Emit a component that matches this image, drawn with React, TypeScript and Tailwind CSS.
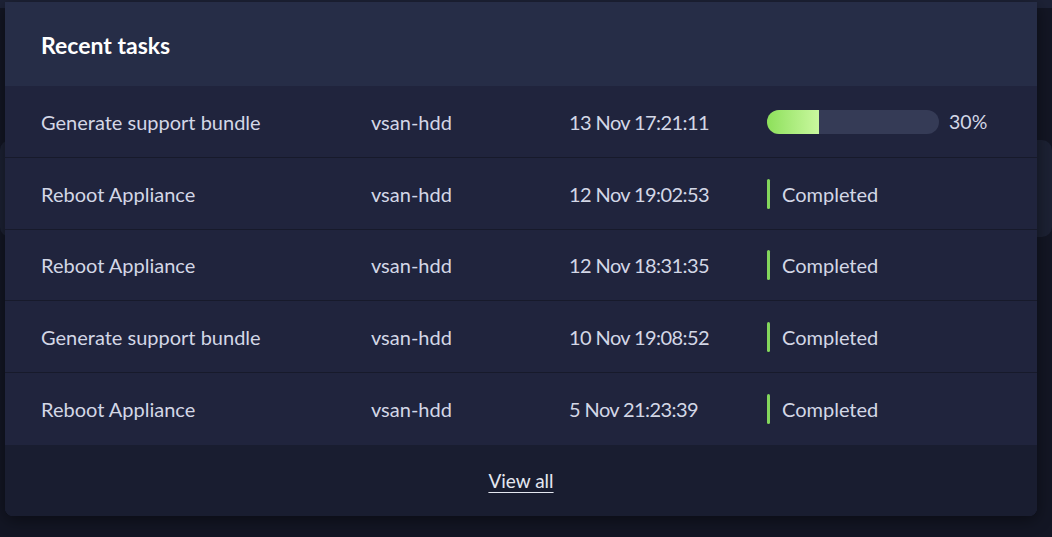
const tasks = [
  { name: "Generate support bundle", host: "vsan-hdd", time: "13 Nov 17:21:11", progress: 30 },
  { name: "Reboot Appliance", host: "vsan-hdd", time: "12 Nov 19:02:53", status: "Completed" },
  { name: "Reboot Appliance", host: "vsan-hdd", time: "12 Nov 18:31:35", status: "Completed" },
  { name: "Generate support bundle", host: "vsan-hdd", time: "10 Nov 19:08:52", status: "Completed" },
  { name: "Reboot Appliance", host: "vsan-hdd", time: "5 Nov 21:23:39", status: "Completed" },
];

export default function App() {
  return (
    <div
      className="relative h-[537px] w-[1052px] overflow-hidden bg-[#131624]"
      style={{ fontFamily: "Lato, 'Open Sans', sans-serif" }}
    >
      {/* page behind the popover */}
      <div className="flex h-full flex-col">
        <div className="h-[8px] bg-[#1d2236]" />
        <div className="h-[132px]" />
        <div className="h-[97px] rounded-[10px] bg-[#1c2133]" />
      </div>

      {/* recent tasks card */}
      <div className="absolute left-[5px] top-[2px] w-[1032px] overflow-hidden rounded-b-[8px] bg-[#20243d] shadow-[0_4px_16px_rgba(0,0,0,0.45)]">
        <div className="flex h-[84px] items-center bg-[#262d47] px-[36px] pt-[2px]">
          <h2 className="text-[23px] leading-[28px] font-bold text-white">Recent tasks</h2>
        </div>

        <div className="divide-y divide-[#171a2b]">
          {tasks.map((t, i) => (
            <div
              key={i}
              className="flex h-[71.75px] items-center px-[36px] pt-[1px] text-[20px] leading-[28px] text-[#d3d7e6]"
            >
              <div className="w-[330px]">{t.name}</div>
              <div className="w-[198px]">{t.host}</div>
              <div className="w-[198px] tracking-[-0.6px]">{t.time}</div>
              {t.progress !== undefined ? (
                <div className="flex items-center gap-[10px]">
                  <div className="h-[24px] w-[172px] overflow-hidden rounded-full bg-[#353b56]">
                    <div
                      className="h-full bg-gradient-to-r from-[#8de05a] to-[#c9f89e]"
                      style={{ width: `${t.progress}%` }}
                    />
                  </div>
                  <span className="text-[19.5px]">{t.progress}%</span>
                </div>
              ) : (
                <div className="flex items-center gap-[12px]">
                  <div className="h-[30px] w-[3px] rounded-full bg-[#83d65c]" />
                  <span>{t.status}</span>
                </div>
              )}
            </div>
          ))}
        </div>

        <div className="flex h-[71px] items-center justify-center bg-[#191d30] pt-[2px]">
          <a className="text-[19px] text-[#e4e7f0] underline underline-offset-[4px]">View all</a>
        </div>
      </div>
    </div>
  );
}
